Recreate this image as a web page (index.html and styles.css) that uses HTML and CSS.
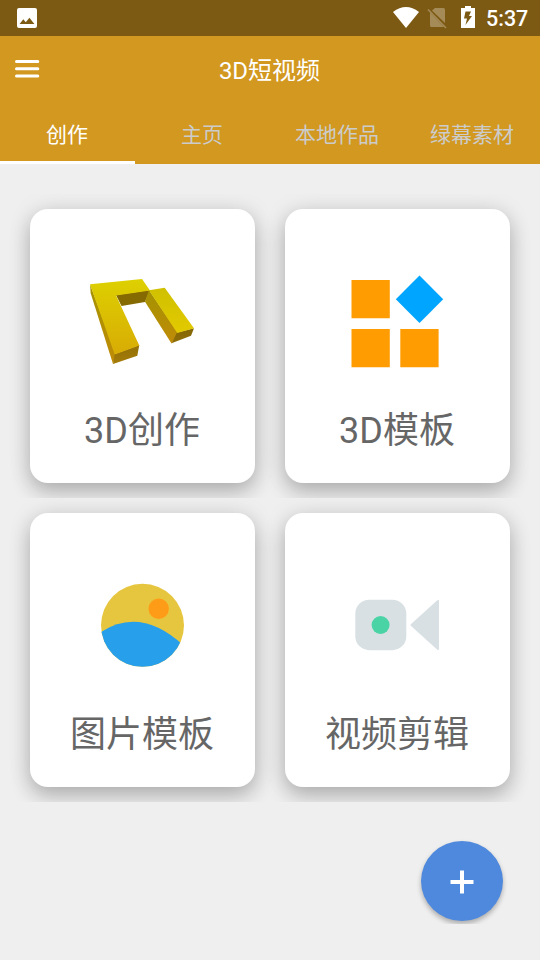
FILE: index.html
```html
<!DOCTYPE html>
<html lang="zh-CN">
<head>
<meta charset="utf-8">
<title>3D短视频</title>
<link rel="stylesheet" href="styles.css">
</head>
<body>
<div class="status">
  <svg class="status-photo" width="20" height="20" viewBox="0 0 20 20"><path fill="#fff" fill-rule="evenodd" d="M2 0h16a2 2 0 0 1 2 2v16a2 2 0 0 1-2 2H2a2 2 0 0 1-2-2V2a2 2 0 0 1 2-2zM2.600 16h14.800l-5-6.300-3.600 4.600-2.500-3z"/></svg>
  <svg class="status-wifi" width="26" height="21" viewBox="0 0 26 21"><path fill="#fff" d="M0 5Q13-5 26 5L13 21z"/></svg>
  <svg class="status-sim" width="20" height="22" viewBox="0 0 20 22"><path fill="#a58b58" d="M8 1h8.500a1.500 1.500 0 0 1 1.500 1.500V16L5 3.500zM3 5.500L17 20H4.500A1.500 1.500 0 0 1 3 18.500z"/><path stroke="#a58b58" stroke-width="1.500" d="M1 2.500l18 18.500"/></svg>
  <svg class="status-battery" width="14" height="22" viewBox="0 0 14 22"><path fill="#fff" fill-rule="evenodd" d="M4 0h6v2h4v20H0V2h4zM4.500 5.500L3 12.500h3L4.500 19l6.500-9H8l2-4.500z"/></svg>
  <span class="clock">5:37</span>
</div>
<header class="header">
  <div class="bar">
    <svg class="menu" width="26" height="20" viewBox="0 0 26 20"><path stroke="#fff" stroke-width="3" stroke-linecap="round" d="M2.500 2.500h21.300M2.500 9.800h21.300M2.500 17h21.300"/></svg>
    <h1 class="title">3D短视频</h1>
  </div>
  <nav class="tabs">
    <div class="tab tab-active">创作</div>
    <div class="tab">主页</div>
    <div class="tab">本地作品</div>
    <div class="tab">绿幕素材</div>
  </nav>
</header>
<main class="content">
  <div class="row">
    <section class="card">
      <svg class="icon" width="120" height="120" viewBox="0 0 120 120">
        <defs>
          <linearGradient id="top" x1="0" y1="0" x2="0" y2="1"><stop offset="0" stop-color="#ddd000"/><stop offset="1" stop-color="#d8ac05"/></linearGradient>
          <linearGradient id="arm" x1="0" y1="0" x2="0" y2="1"><stop offset="0" stop-color="#cfc000"/><stop offset="1" stop-color="#e3ca00"/></linearGradient>
          <linearGradient id="side" x1="0" y1="0" x2="0" y2="1"><stop offset="0" stop-color="#a49300"/><stop offset="1" stop-color="#c08b08"/></linearGradient>
          <linearGradient id="end" x1="0" y1="0" x2="0" y2="1"><stop offset="0" stop-color="#846606"/><stop offset="1" stop-color="#a47c08"/></linearGradient>
        </defs>
        <path fill="url(#side)" d="M8 19.300l.7 9L31 99l3-10z"/>
        <path fill="#846a00" d="M34 30l34-5-5 12-23.500 4z"/>
        <path fill="url(#side)" d="M67 25l29 43-6.500 10.500L63 36.700z"/>
        <path fill="url(#end)" d="M32.700 89l24.600-9-2 10.700L31 99zM95 67.500l17-4.200-3 7.400-19.500 7.500z"/>
        <path fill="url(#top)" d="M8 19.300L60 14l8 11.400-34 5.200 23.300 50-24.600 8.900z"/>
        <path fill="url(#arm)" d="M67 25.300l15.700-2.600L112 63.300 95.300 68z"/>
      </svg>
      <div class="label">3D创作</div>
    </section>
    <section class="card">
      <svg class="icon" width="120" height="120" viewBox="0 0 120 120"><path fill="#ff9c02" d="M14.500 15h38.300v38.300H14.500zM14.500 64h38.300v38.300H14.500zM63.300 64h38.300v38.300H63.300z"/><path fill="#00a5ff" d="M82.500 10.500l23.700 23.700-23.700 23.700-23.700-23.700z"/></svg>
      <div class="label">3D模板</div>
    </section>
  </div>
  <div class="row">
    <section class="card">
      <svg class="icon" width="120" height="120" viewBox="0 0 120 120"><defs><clipPath id="disc"><circle cx="60.500" cy="56.300" r="41.500"/></clipPath></defs><g clip-path="url(#disc)"><path fill="#e7c63f" d="M0 0h120v120H0z"/><path fill="#279fea" d="M10 69.500Q54 33 101 76v44H10z"/><circle cx="76.700" cy="39.800" r="10.200" fill="#ff9c17"/></g></svg>
      <div class="label">图片模板</div>
    </section>
    <section class="card">
      <svg class="icon" width="120" height="120" viewBox="0 0 120 120"><rect x="18.300" y="30.700" width="51" height="50.500" rx="14" fill="#d8e0e3"/><circle cx="43.600" cy="56" r="9" fill="#4ad3a5"/><path fill="#d8e0e3" stroke="#d8e0e3" stroke-width="2" stroke-linejoin="round" d="M74.500 56L101 32v48z"/></svg>
      <div class="label">视频剪辑</div>
    </section>
  </div>
</main>
<div class="fab-box">
  <div class="fab">
    <svg width="24" height="24" viewBox="0 0 24 24"><path fill="#fff" d="M10 .5h4V10h9.500v4H14v9.500h-4V14H.5v-4H10z"/></svg>
  </div>
</div>
</body>
</html>
```

FILE: styles.css
```css
* { box-sizing: border-box; }
body {
  margin: 0;
  height: 960px;
  overflow: hidden;
  background: #efefef;
  font-family: Roboto, "Noto Sans CJK SC", sans-serif;
}
svg { display: block; flex: none; }
.status {
  display: flex;
  height: 36px;
  padding: 0 12px 0 17px;
  background: #7d5a13;
  color: #fff;
}
.status-photo { margin-top: 8px; }
.status-wifi { margin: 7px 8px 0 auto; }
.status-sim { margin: 7px 14px 0 0; }
.status-battery { margin: 6px 11px 0 0; }
.clock {
  width: 42px;
  font-size: 21.5px;
  font-weight: 500;
  line-height: 38px;
  white-space: nowrap;
}
.header {
  height: 128px;
  background: #d2981f;
}
.bar {
  display: grid;
  grid-template-columns: 100px 1fr 101px;
  height: 69px;
}
.menu { margin: 23px 0 0 14px; }
.title {
  margin: 0;
  color: #fff;
  font-size: 24px;
  font-weight: 400;
  line-height: 71px;
  text-align: center;
}
.tabs { display: flex; height: 59px; }
.tab {
  flex: 1;
  padding-right: 1px;
  border-bottom: 3px solid transparent;
  color: #ccc;
  font-size: 21px;
  line-height: 61px;
  text-align: center;
}
.tab-active { border-color: #fff; color: #fff; }
.content { padding-top: 30px; }
.row {
  display: flex;
  gap: 30px;
  height: 304px;
  padding: 15px 30px;
  overflow: hidden;
}
.card {
  display: flex;
  flex: 1;
  flex-direction: column;
  align-items: center;
  padding: 56px 1px 0 0;
  border-radius: 18px;
  background: #fff;
  box-shadow: 0 9px 20px rgba(0, 0, 0, .24), 0 0 26px rgba(0, 0, 0, .08);
}
.label {
  margin-top: 20px;
  color: #666;
  font-size: 36px;
  line-height: 52px;
}
.fab-box {
  position: absolute;
  left: 415px;
  top: 835px;
  width: 94px;
  height: 89px;
  padding: 6px;
  overflow: hidden;
}
.fab {
  display: grid;
  place-items: center;
  width: 82px;
  height: 80px;
  padding-top: 2px;
  border-radius: 50%;
  background: #4e89dd;
  box-shadow: 0 3px 5px rgba(0, 0, 0, .28);
}
```
